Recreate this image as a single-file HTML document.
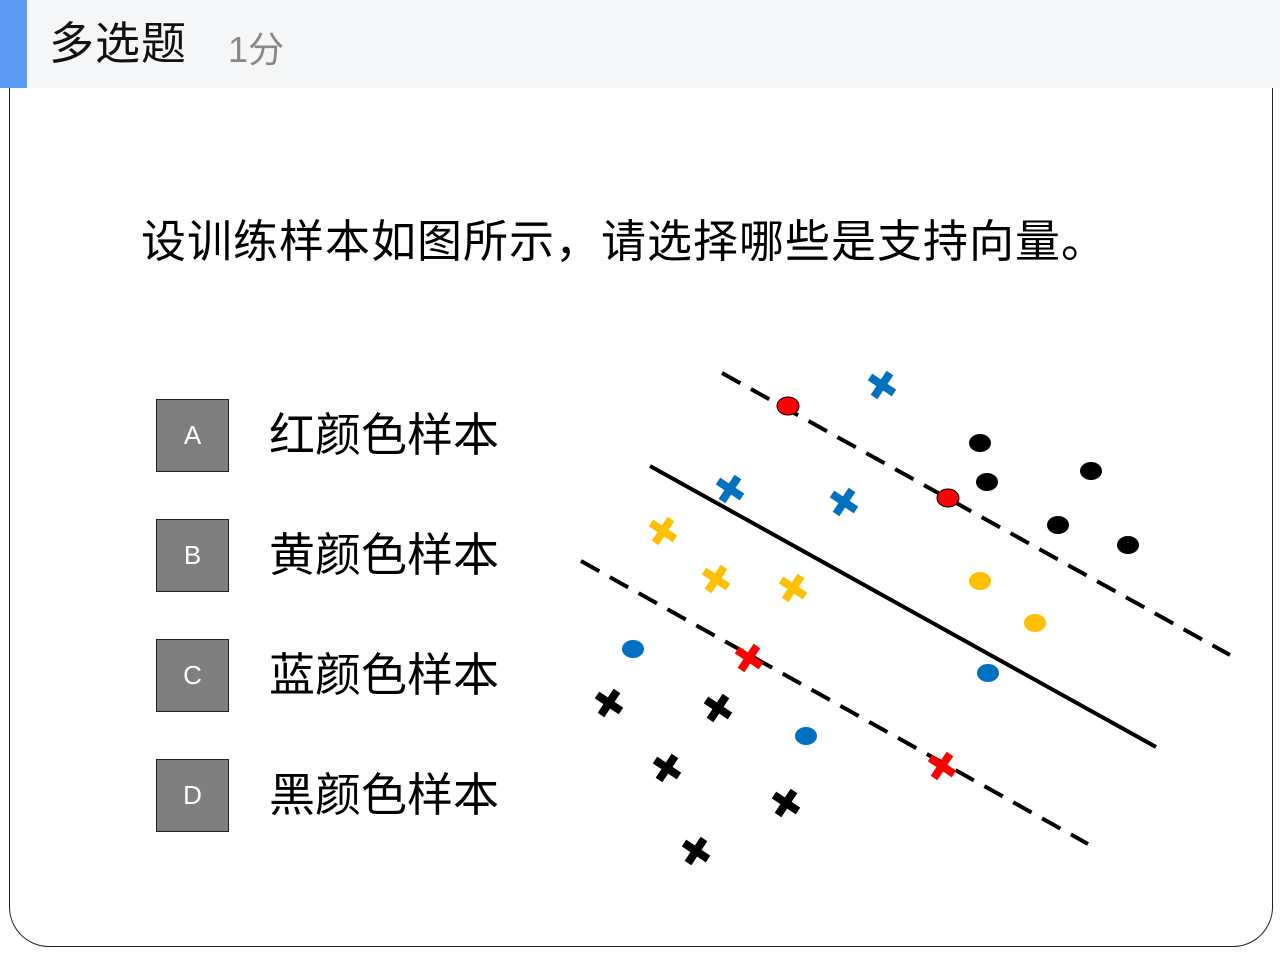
<!DOCTYPE html>
<html><head><meta charset="utf-8"><style>
body{margin:0;width:1280px;height:960px;background:#fff;font-family:"Liberation Sans","Noto Sans CJK SC",sans-serif;position:relative;overflow:hidden}
.hdr{position:absolute;left:0;top:0;width:1280px;height:88px;background:#f5f6f8}
.bar{position:absolute;left:0;top:0;width:27px;height:88px;background:#5b9af2}
.t{position:absolute;left:49px;top:18px;font-size:45px;color:#111;line-height:52px;letter-spacing:1px}
.s{position:absolute;left:228px;top:28px;font-size:36px;color:#888;line-height:44px}
.card{position:absolute;left:9px;top:88px;width:1262px;height:858px;border:1px solid #222;border-top:none;border-radius:0 0 40px 40px}
.q{position:absolute;left:141px;top:214px;font-size:45px;line-height:56px;color:#000;white-space:nowrap;letter-spacing:1px}
.box{position:absolute;left:156px;width:71px;height:71px;background:#7f7f7f;border:1.5px solid #222;color:#fff;font-size:26px;text-align:center;line-height:71px}
.opt{position:absolute;left:269px;font-size:46px;line-height:56px;color:#000}
</style></head><body>
<div class="hdr"><div class="bar"></div><div class="t">多选题</div><div class="s">1分</div></div>
<div class="card"></div>
<div class="q">设训练样本如图所示，请选择哪些是支持向量。</div>
<div class="box" style="top:399px">A</div><div class="opt" style="top:407px">红颜色样本</div>
<div class="box" style="top:519px">B</div><div class="opt" style="top:527px">黄颜色样本</div>
<div class="box" style="top:639px">C</div><div class="opt" style="top:647px">蓝颜色样本</div>
<div class="box" style="top:759px">D</div><div class="opt" style="top:767px">黑颜色样本</div>
<svg width="1280" height="960" style="position:absolute;left:0;top:0">
<defs><g id="x"><line x1="-12" y1="-8" x2="12" y2="8" stroke-width="8"/><line x1="-8" y1="12" x2="8" y2="-12" stroke-width="8"/></g></defs>
<g stroke="#000" stroke-width="4">
<line x1="722" y1="373" x2="1230" y2="655" stroke-dasharray="21,12"/>
<line x1="650" y1="466" x2="1156" y2="747"/>
<line x1="581" y1="561" x2="1088" y2="844" stroke-dasharray="21,12"/>
</g>
<g fill="#000"><ellipse cx="980" cy="443" rx="11" ry="9"/><ellipse cx="987" cy="482" rx="11" ry="9"/><ellipse cx="1091" cy="471" rx="11" ry="9"/><ellipse cx="1058" cy="525" rx="11" ry="9"/><ellipse cx="1128" cy="545" rx="11" ry="9"/></g>
<g fill="#f00" stroke="#000" stroke-width="1"><ellipse cx="788" cy="406" rx="11" ry="9"/><ellipse cx="948" cy="498" rx="11" ry="9"/></g>
<g fill="#ffc000"><ellipse cx="980" cy="581" rx="11" ry="9"/><ellipse cx="1035" cy="623" rx="11" ry="9"/></g>
<g fill="#0070c0"><ellipse cx="633" cy="649" rx="11" ry="9"/><ellipse cx="988" cy="673" rx="11" ry="9"/><ellipse cx="806" cy="736" rx="11" ry="9"/></g>
<g stroke="#0070c0"><use href="#x" x="882" y="385"/><use href="#x" x="730" y="489"/><use href="#x" x="844" y="502"/></g>
<g stroke="#ffc000"><use href="#x" x="663" y="531"/><use href="#x" x="716" y="579"/><use href="#x" x="793" y="588"/></g>
<g stroke="#f00"><use href="#x" x="749" y="658"/><use href="#x" x="942" y="766"/></g>
<g stroke="#000"><use href="#x" x="609" y="703"/><use href="#x" x="718" y="708"/><use href="#x" x="667" y="768"/><use href="#x" x="786" y="803"/><use href="#x" x="696" y="851"/></g>
</svg>
</body></html>
